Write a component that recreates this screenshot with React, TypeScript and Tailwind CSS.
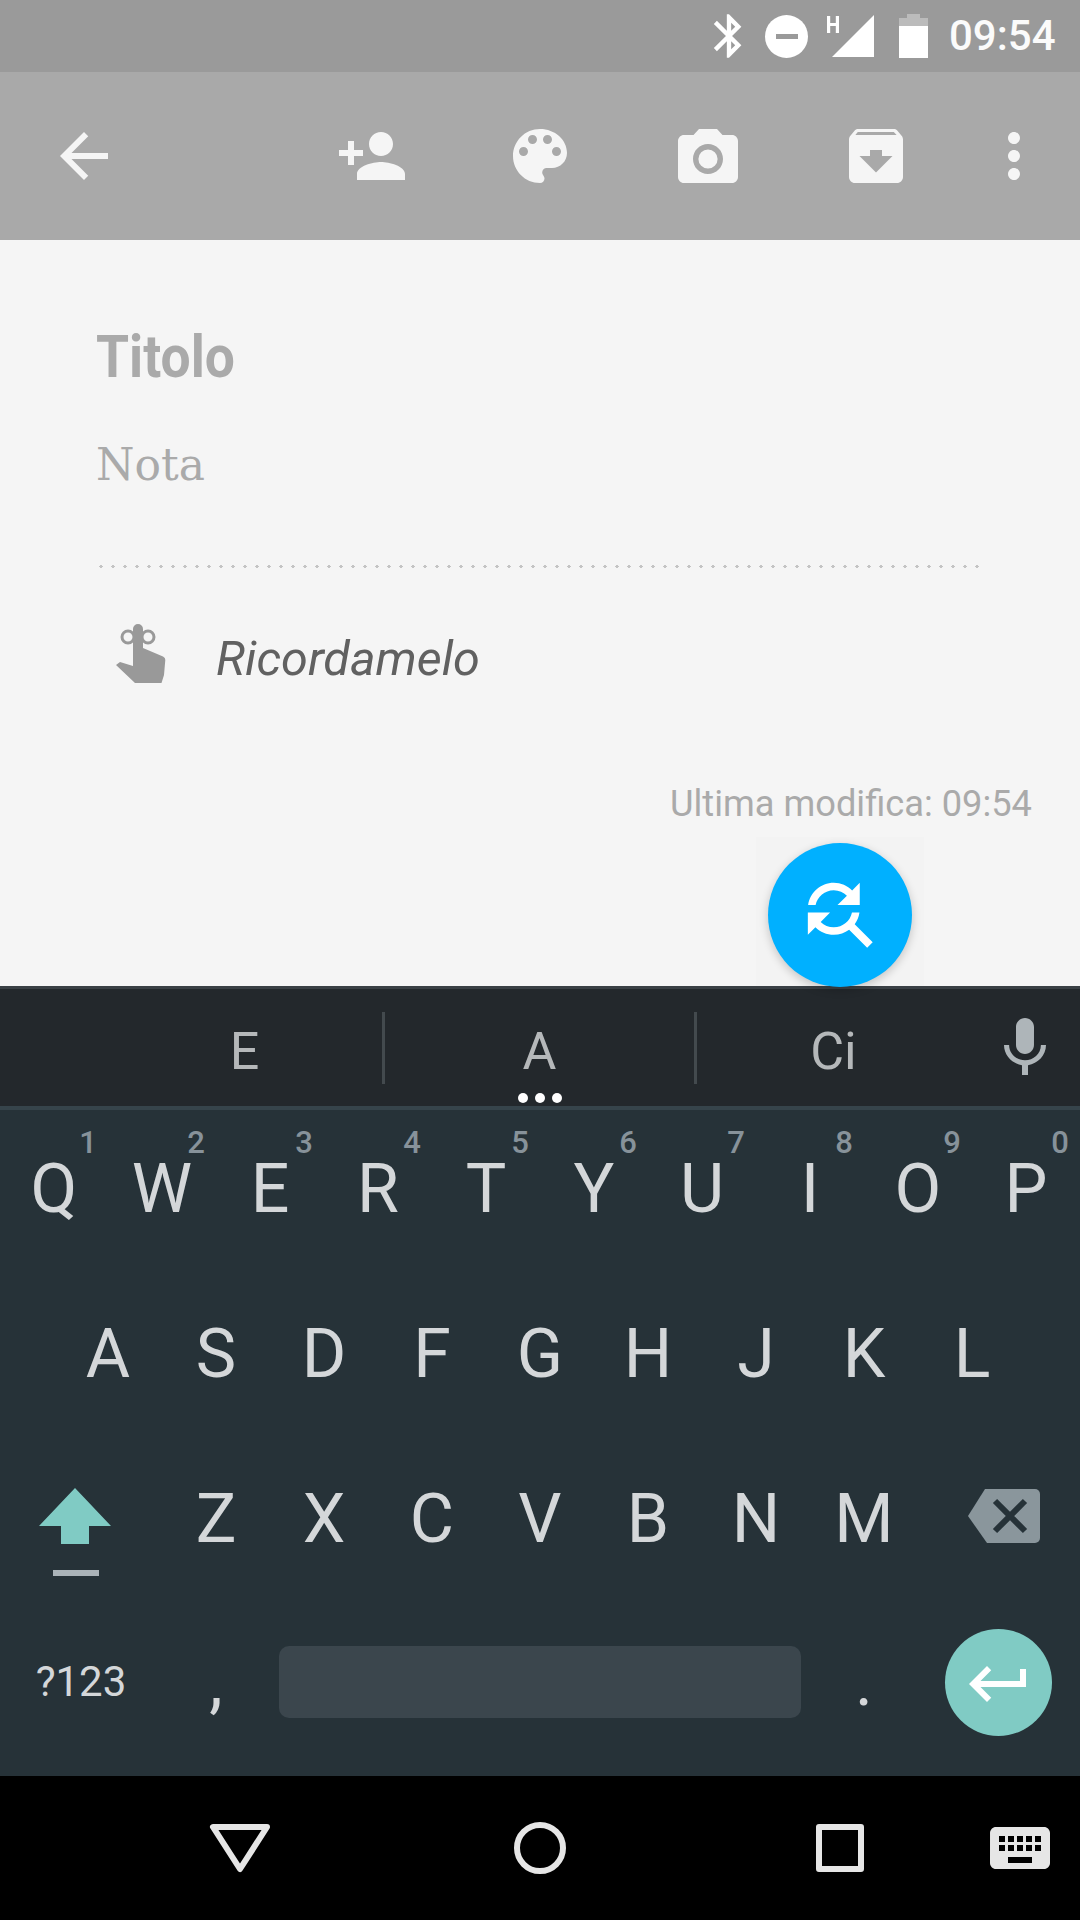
import React from "react";

const topRow = ["Q", "W", "E", "R", "T", "Y", "U", "I", "O", "P"];
const hints = ["1", "2", "3", "4", "5", "6", "7", "8", "9", "0"];
const midRow = ["A", "S", "D", "F", "G", "H", "J", "K", "L"];
const lowRow = ["Z", "X", "C", "V", "B", "N", "M"];

function Icon({ d, size = 72, className = "" }: { d: string; size?: number; className?: string }) {
  return (
    <svg width={size} height={size} viewBox="0 0 24 24" className={`shrink-0 ${className}`} fill="currentColor">
      <path d={d} />
    </svg>
  );
}

function StatusBar() {
  return (
    <div className="h-[72px] bg-[#9a9a9a] flex items-center text-white pl-[703px] shrink-0">
      <Icon size={52} d="M17.71 7.71L12 2h-1v7.59L6.41 5 5 6.41 10.59 12 5 17.59 6.41 19 11 14.41V22h1l5.71-5.71-4.3-4.29 4.3-4.29zM13 5.83l1.88 1.88L13 9.59V5.83zm1.88 10.46L13 18.17v-3.76l1.88 1.88z" />
      {/* do not disturb */}
      <div className="ml-[10px] w-[43px] h-[43px] rounded-full bg-white flex items-center justify-center shrink-0">
        <div className="w-[22px] h-[5px] bg-[#9a9a9a]" />
      </div>
      {/* signal with H */}
      <svg width="48" height="44" viewBox="0 0 48 44" className="ml-[18px] shrink-0" fill="white">
        <path d="M1 2h3.200v7h5.600V2H13v17H9.800v-7H4.200v7H1z" />
        <path d="M6 43L48 1v42z" />
      </svg>
      {/* battery */}
      <div className="ml-[25px] w-[29px] h-[44px] flex flex-col items-center shrink-0">
        <div className="w-[13px] h-[4px] bg-[#bbbbbb] shrink-0" />
        <div className="w-[29px] h-[8px] bg-[#bbbbbb] shrink-0" />
        <div className="w-[29px] h-[32px] bg-white shrink-0" />
      </div>
      <span className="ml-[21px] text-[42px] font-medium leading-none text-[#fbfbfb]">09:54</span>
    </div>
  );
}

function Toolbar() {
  return (
    <div className="h-[168px] bg-[#a9a9a9] flex items-center pl-[48px] text-[#f5f5f5] shrink-0">
      <Icon d="M20 11H7.830l5.590-5.590L12 4l-8 8 8 8 1.410-1.410L7.830 13H20v-2z" />
      <Icon className="ml-[216px]" d="M15 12c2.210 0 4-1.790 4-4s-1.790-4-4-4-4 1.790-4 4 1.790 4 4 4zm-9-2V7H4v3H1v2h3v3h2v-3h3v-2H6zm9 4c-2.670 0-8 1.340-8 4v2h16v-2c0-2.660-5.330-4-8-4z" />
      <Icon className="ml-[96px]" d="M12 3c-4.970 0-9 4.030-9 9s4.030 9 9 9c.830 0 1.500-.670 1.500-1.500 0-.390-.150-.740-.390-1.010-.230-.260-.380-.610-.380-.990 0-.830.670-1.500 1.500-1.500H16c2.760 0 5-2.240 5-5 0-4.420-4.030-8-9-8zm-5.500 9c-.830 0-1.500-.670-1.500-1.500S5.670 9 6.500 9 8 9.670 8 10.500 7.330 12 6.500 12zm3-4C8.670 8 8 7.330 8 6.500S8.670 5 9.500 5s1.500.670 1.500 1.500S10.330 8 9.500 8zm5 0c-.830 0-1.500-.670-1.500-1.500S13.670 5 14.500 5s1.500.670 1.500 1.500S15.330 8 14.500 8zm3 4c-.830 0-1.500-.670-1.500-1.500S16.670 9 17.500 9s1.500.670 1.500 1.500-.670 1.500-1.500 1.500z" />
      <Icon className="ml-[96px] translate-y-[3px]" d="M12 15.200a3.200 3.200 0 1 0 0-6.400 3.200 3.200 0 0 0 0 6.400zM9 2L7.170 4H4c-1.100 0-2 .9-2 2v12c0 1.100.9 2 2 2h16c1.100 0 2-.9 2-2V6c0-1.100-.9-2-2-2h-3.170L15 2H9zm3 15c-2.760 0-5-2.240-5-5s2.240-5 5-5 5 2.240 5 5-2.240 5-5 5z" />
      <Icon className="ml-[96px]" d="M20.540 5.230l-1.390-1.680C18.880 3.210 18.470 3 18 3H6c-.470 0-.880.210-1.160.550L3.460 5.230C3.170 5.570 3 6.020 3 6.500V19c0 1.100.9 2 2 2h14c1.100 0 2-.9 2-2V6.500c0-.480-.170-.930-.460-1.270zM12 17.500L6.500 12H10v-2h4v2h3.500L12 17.500zM5.120 5l.810-1h12l.940 1H5.120z" />
      <Icon className="ml-[66px]" d="M12 8c1.100 0 2-.9 2-2s-.9-2-2-2-2 .9-2 2 .9 2 2 2zm0 2c-1.100 0-2 .9-2 2s.9 2 2 2 2-.9 2-2-.9-2-2-2zm0 6c-1.100 0-2 .9-2 2s.9 2 2 2 2-.9 2-2-.9-2-2-2z" />
    </div>
  );
}

function ReminderIcon() {
  return (
    <svg width="70" height="75" viewBox="0 0 70 75" className="shrink-0" fill="#999999">
      <circle cx="23" cy="22" r="6" fill="none" stroke="#999999" strokeWidth="3" />
      <circle cx="43" cy="22" r="6" fill="none" stroke="#999999" strokeWidth="3" />
      <path d="M28 14a5 5 0 0 1 10 0v19L58 41.500Q60.500 42.500 60.300 45L59 60 56.500 68H30L11 50 15 47 28 51z" />
    </svg>
  );
}

function NoteBody() {
  return (
    <div className="h-[746px] bg-[#f5f5f5] flex flex-col shrink-0 pl-[96px]">
      <div className="mt-[82px] h-[70px] text-[60px] leading-[70px] font-bold text-[#aaaaaa] origin-left scale-x-[0.89]">Titolo</div>
      <div className="mt-[38px] h-[70px] text-[44px] leading-[70px] text-[#aaaaaa] font-['DejaVu_Serif',serif]">Nota</div>
      <div className="mt-[65px] -ml-[1px] w-[887px] h-[3px] bg-[radial-gradient(circle,#c4c4c4_1.5px,transparent_1.8px)] bg-[length:12px_3px]" />
      <div className="mt-[47px] ml-[9px] h-[75px] flex items-center">
        <ReminderIcon />
        <span className="ml-[41px] pt-[14px] text-[48.5px] italic text-[#616161]">Ricordamelo</span>
      </div>
      <div className="mt-[92px] pr-[48px] text-right text-[36.25px] leading-[44px] text-[#aaaaaa]">Ultima modifica: 09:54</div>
    </div>
  );
}

function Fab() {
  return (
    <div className="absolute left-[756px] top-[837px] w-[168px] h-[149px] bg-[#f3f3f3] flex justify-center pt-[6px]">
      <div className="w-[144px] h-[144px] rounded-full bg-[#00b0ff] shadow-[0_3px_10px_rgba(0,0,0,0.2)] flex items-center justify-center text-white shrink-0">
        <Icon
          size={89}
          className="-translate-x-[3px] -translate-y-[3px]"
          d="M11 6c1.380 0 2.630.560 3.540 1.460L12 10h6V4l-2.050 2.050C14.680 4.780 12.930 4 11 4c-3.530 0-6.430 2.610-6.920 6H6.100c.460-2.280 2.480-4 4.900-4zm5.640 9.140c.660-.9 1.120-1.970 1.280-3.140H15.900c-.460 2.280-2.480 4-4.900 4-1.380 0-2.630-.560-3.540-1.460L10 12H4v6l2.050-2.050C7.320 17.220 9.070 18 11 18c1.550 0 2.980-.510 4.140-1.360L20 21.490 21.490 20l-4.850-4.860z"
        />
      </div>
    </div>
  );
}

function SuggestionStrip() {
  return (
    <div className="h-[124px] bg-[#23282c] border-t-[3px] border-b-[4px] border-t-[#3a4045] border-b-[#36444b] flex items-center shrink-0 pl-[107px] text-[52px] text-[#b5b8ba]">
      <div className="w-[275px] pt-[8px] text-center">E</div>
      <div className="w-[3px] h-[72px] bg-[#434a4e]" />
      <div className="w-[309px] pt-[8px] relative text-center">
        A
        <div className="absolute left-0 right-0 top-[88px] flex justify-center gap-[7px]">
          <div className="w-[10px] h-[10px] rounded-full bg-white" />
          <div className="w-[10px] h-[10px] rounded-full bg-white" />
          <div className="w-[10px] h-[10px] rounded-full bg-white" />
        </div>
      </div>
      <div className="w-[3px] h-[72px] bg-[#434a4e]" />
      <div className="w-[277px] pt-[8px] pr-[4px] text-center">Ci</div>
      <Icon
        className="ml-[15px] text-[#aeb5b9]"
        d="M12 14c1.660 0 2.990-1.340 2.990-3L15 5c0-1.660-1.340-3-3-3S9 3.340 9 5v6c0 1.660 1.340 3 3 3zm5.300-3c0 3-2.540 5.100-5.300 5.100S6.700 14 6.700 11H5c0 3.410 2.720 6.230 6 6.720V21h2v-3.280c3.280-.480 6-3.300 6-6.720h-1.700z"
      />
    </div>
  );
}

function Key({ label, hint }: { label: string; hint?: string }) {
  return (
    <div className="relative w-[108px] h-full flex items-center justify-center">
      {label}
      {hint && (
        <span className="absolute left-[76px] top-[15px] w-[24px] text-center text-[31px] leading-[36px] font-medium text-[#87929a]">{hint}</span>
      )}
    </div>
  );
}

function Keyboard() {
  return (
    <div className="h-[666px] bg-[#263238] flex flex-col shrink-0 pb-[6px] text-[68px] leading-none text-[#d4d7d9]">
      <div className="h-[165px] pb-[7px] flex">
        {topRow.map((k, i) => (
          <Key key={k} label={k} hint={hints[i]} />
        ))}
      </div>
      <div className="h-[165px] pb-[7px] flex pl-[54px]">
        {midRow.map((k) => (
          <Key key={k} label={k} />
        ))}
      </div>
      <div className="h-[165px] pb-[7px] flex">
        <div className="w-[162px] relative">
          <svg width="72" height="56" viewBox="0 0 72 56" className="absolute left-[39px] top-[48px]" fill="#80cbc4">
            <path d="M36 0L72 38H50V56H22V38H0z" />
          </svg>
          <div className="absolute left-[53px] top-[130px] w-[46px] h-[6px] bg-[#aab3b8]" />
        </div>
        {lowRow.map((k) => (
          <Key key={k} label={k} />
        ))}
        <div className="flex-1 flex items-center pl-[50px] pb-[6px]">
          <svg width="72" height="54" viewBox="0 0 72 54">
            <path d="M17 0H67a5 5 0 0 1 5 5V49a5 5 0 0 1-5 5H19L0 27z" fill="#8a969c" />
            <path d="M27 12L57 42M57 12L27 42" stroke="#263238" strokeWidth="6" fill="none" />
          </svg>
        </div>
      </div>
      <div className="h-[165px] pb-[11px] flex items-center">
        <div className="w-[162px] text-center text-[42px]">?123</div>
        <Key label="," />
        <div className="ml-[9px] w-[522px] h-[72px] rounded-[10px] bg-[#3b464d]" />
        <div className="ml-[9px]">
          <Key label="." />
        </div>
        <div className="ml-[27px] w-[107px] h-[107px] rounded-full bg-[#80cbc4] flex items-center justify-center text-white">
          <Icon className="translate-y-[2px]" d="M19 7v4H5.830l3.580-3.590L8 6l-6 6 6 6 1.410-1.410L5.830 13H21V7z" />
        </div>
      </div>
    </div>
  );
}

function NavBar() {
  return (
    <div className="h-[144px] bg-black flex items-center shrink-0 text-[#e6e6e6] pl-[208px]">
      <svg width="64" height="50" viewBox="0 0 64 50" className="shrink-0">
        <path d="M5 4H59L32 46z" fill="none" stroke="currentColor" strokeWidth="6" strokeLinejoin="round" />
      </svg>
      <div className="ml-[242px] w-[52px] h-[52px] rounded-full border-[6px] border-[#e6e6e6] shrink-0" />
      <div className="ml-[250px] w-[48px] h-[48px] rounded-[3px] border-[6px] border-[#e6e6e6] shrink-0" />
      <Icon className="ml-[120px]" d="M20 5H4c-1.100 0-1.990.9-1.990 2L2 17c0 1.100.9 2 2 2h16c1.100 0 2-.9 2-2V7c0-1.100-.9-2-2-2zm-9 3h2v2h-2V8zm0 3h2v2h-2v-2zM8 8h2v2H8V8zm0 3h2v2H8v-2zm-1 2H5v-2h2v2zm0-3H5V8h2v2zm9 7H8v-2h8v2zm0-4h-2v-2h2v2zm0-3h-2V8h2v2zm3 3h-2v-2h2v2zm0-3h-2V8h2v2z" />
    </div>
  );
}

export default function App() {
  return (
    <div className="relative w-[1080px] h-[1920px] overflow-hidden flex flex-col font-['Roboto',sans-serif]">
      <StatusBar />
      <Toolbar />
      <NoteBody />
      <SuggestionStrip />
      <Keyboard />
      <NavBar />
      <Fab />
    </div>
  );
}
